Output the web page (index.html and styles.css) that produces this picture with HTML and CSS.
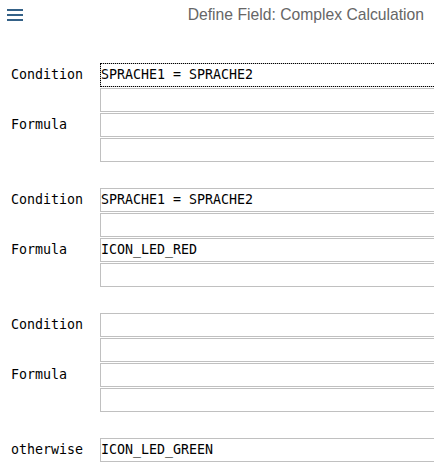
FILE: index.html
```html
<!DOCTYPE html>
<html>
<head>
<meta charset="utf-8">
<link rel="stylesheet" href="styles.css">
</head>
<body>
<header class="bar">
  <div class="menu" aria-label="Menu"><span></span><span></span><span></span></div>
  <div class="title">Define Field: Complex Calculation</div>
</header>
<main class="content">
  <section class="group">
    <div class="label r1">Condition</div>
    <div class="field f1 focus">SPRACHE1 = SPRACHE2</div>
    <div class="field f2"></div>
    <div class="label r3">Formula</div>
    <div class="field f3"></div>
    <div class="field f4"></div>
  </section>
  <section class="group">
    <div class="label r1">Condition</div>
    <div class="field f1">SPRACHE1 = SPRACHE2</div>
    <div class="field f2"></div>
    <div class="label r3">Formula</div>
    <div class="field f3">ICON_LED_RED</div>
    <div class="field f4"></div>
  </section>
  <section class="group">
    <div class="label r1">Condition</div>
    <div class="field f1"></div>
    <div class="field f2"></div>
    <div class="label r3">Formula</div>
    <div class="field f3"></div>
    <div class="field f4"></div>
  </section>
  <section class="group single">
    <div class="label r1">otherwise</div>
    <div class="field f1">ICON_LED_GREEN</div>
  </section>
</main>
</body>
</html>
```

FILE: styles.css
```css
html, body {
  margin: 0;
  padding: 0;
  background: #ffffff;
  overflow: hidden;
}
body {
  width: 434px;
  height: 462px;
}
.bar {
  display: flex;
  align-items: center;
  justify-content: space-between;
  height: 30px;
  padding: 0 10px 0 7px;
}
.menu {
  display: flex;
  flex-direction: column;
  gap: 3px;
  width: 16px;
}
.menu span {
  display: block;
  height: 2px;
  background: #346187;
}
.title {
  font-family: "Liberation Sans", Arial, sans-serif;
  font-size: 15.7px;
  color: #666666;
}
.content {
  padding-top: 33px;
  display: flex;
  flex-direction: column;
  gap: 26px;
}
.group {
  display: grid;
  grid-template-columns: 100px 350px;
  grid-template-rows: repeat(4, 24px);
  row-gap: 1px;
}
.group.single {
  grid-template-rows: 24px;
}
.label {
  grid-column: 1;
  padding-left: 11px;
  font-family: "DejaVu Sans Mono", "Liberation Mono", monospace;
  font-size: 13.3px;
  line-height: 24px;
  color: #000000;
}
.r1 { grid-row: 1; }
.r3 { grid-row: 3; }
.field {
  grid-column: 2;
  box-sizing: border-box;
  height: 24px;
  border: 1px solid #c0c0c0;
  padding: 0;
  font-family: "DejaVu Sans Mono", "Liberation Mono", monospace;
  font-size: 13.3px;
  line-height: 22px;
  color: #000000;
  white-space: nowrap;
}
.f1 { grid-row: 1; }
.f2 { grid-row: 2; }
.f3 { grid-row: 3; }
.f4 { grid-row: 4; }
.focus {
  outline: 1px dotted #000000;
  outline-offset: -1px;
}
```
